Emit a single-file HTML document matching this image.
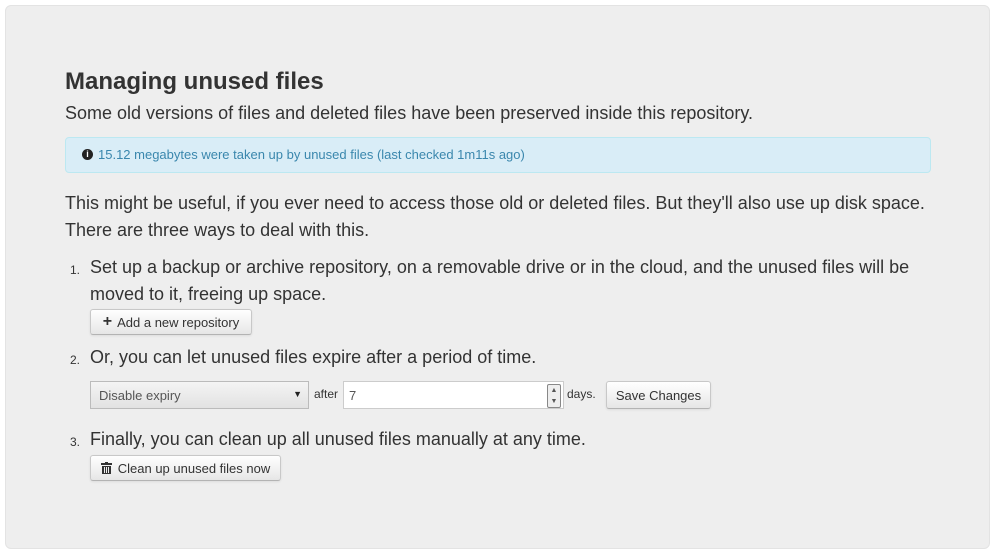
<!DOCTYPE html>
<html><head><style>
body{margin:0;background:#fff;font-family:"Liberation Sans",sans-serif;color:#333;width:994px;height:552px;position:relative;overflow:hidden}
.panel{position:absolute;left:5px;top:5px;width:985px;height:544px;background:#eee;border-radius:6px;border:1px solid #e3e3e3;box-sizing:border-box}
.a{position:absolute;white-space:nowrap}
.t{font-size:18px;color:#333}
.btn{position:absolute;box-sizing:border-box;border:1px solid #c8c8c8;border-bottom-color:#b3b3b3;border-radius:3px;background:linear-gradient(#fff,#e6e6e6);font-size:13px;color:#333;display:flex;align-items:center;justify-content:center;padding:0;white-space:nowrap;box-shadow:0 1px 2px rgba(0,0,0,.08)}
.n{font-size:12px;color:#333}
</style></head><body>
<div class="panel"></div>
<div class="a" style="left:65px;top:68px;font-size:24px;font-weight:bold;color:#333">Managing unused files</div>
<div class="a t" style="left:65px;top:103px">Some old versions of files and deleted files have been preserved inside this repository.</div>
<div class="a" style="left:65px;top:137px;width:866px;height:36px;box-sizing:border-box;background:#d9edf7;border:1px solid #bce8f1;border-radius:4px"></div>
<div class="a" style="left:82px;top:149px;width:11px;height:11px;border-radius:50%;background:#222;color:#fff;font-size:9px;font-weight:bold;text-align:center;line-height:11px">i</div>
<div class="a" style="left:98px;top:147px;font-size:13px;color:#3a87ad">15.12 megabytes were taken up by unused files (last checked 1m11s ago)</div>
<div class="a t" style="left:65px;top:193px">This might be useful, if you ever need to access those old or deleted files. But they'll also use up disk space.</div>
<div class="a t" style="left:65px;top:220px">There are three ways to deal with this.</div>
<div class="a n" style="left:70px;top:263px">1.</div>
<div class="a t" style="left:90px;top:257px">Set up a backup or archive repository, on a removable drive or in the cloud, and the unused files will be</div>
<div class="a t" style="left:90px;top:284px">moved to it, freeing up space.</div>
<div class="btn" style="left:90px;top:309px;width:162px;height:26px"><span style="font-weight:bold;font-size:16px;margin-right:5px">+</span>Add a new repository</div>
<div class="a n" style="left:70px;top:353px">2.</div>
<div class="a t" style="left:90px;top:347px">Or, you can let unused files expire after a period of time.</div>
<div class="a" style="left:90px;top:381px;width:219px;height:28px;box-sizing:border-box;border:1px solid #bbb;background:linear-gradient(#f4f4f4,#e2e2e2);font-size:13px;color:#555;padding:6px 8px">Disable expiry<span style="position:absolute;right:6px;top:7px;font-size:9px;color:#222">▼</span></div>
<div class="a n" style="left:314px;top:387px">after</div>
<div class="a" style="left:343px;top:381px;width:221px;height:28px;box-sizing:border-box;border:1px solid #ccc;background:#fff;font-size:13px;color:#555;padding:6px 5px">7
<div style="position:absolute;right:2px;top:2px;width:12px;height:22px;border:1px solid #888;border-radius:2px;background:#eee;font-size:7px;line-height:11px;text-align:center">▲<br>▼</div></div>
<div class="a n" style="left:567px;top:387px">days.</div>
<div class="btn" style="left:606px;top:381px;width:105px;height:28px">Save Changes</div>
<div class="a n" style="left:70px;top:435px">3.</div>
<div class="a t" style="left:90px;top:429px">Finally, you can clean up all unused files manually at any time.</div>
<div class="btn" style="left:90px;top:455px;width:191px;height:26px"><svg width="11" height="12" viewBox="0 0 11 12" style="margin-right:6px"><rect x="0" y="1" width="11" height="2" fill="#333"/><rect x="4" y="0" width="3" height="1" fill="#333"/><rect x="1" y="4" width="9" height="8" fill="#333"/><rect x="3" y="5" width="1" height="6" fill="#eee"/><rect x="5" y="5" width="1" height="6" fill="#eee"/><rect x="7" y="5" width="1" height="6" fill="#eee"/></svg>Clean up unused files now</div>
</body></html>
